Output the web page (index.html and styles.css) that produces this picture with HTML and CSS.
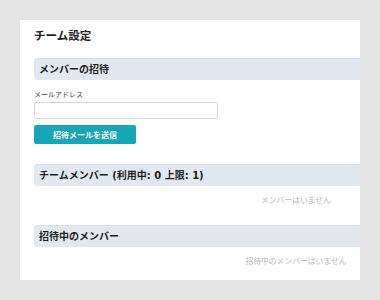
FILE: index.html
```html
<!DOCTYPE html>
<html lang="ja">
<head>
<meta charset="utf-8">
<link rel="stylesheet" href="styles.css">
</head>
<body>
  <div class="card">
    <div class="inner">
      <h1 class="title">チーム設定</h1>
      <section class="section">
        <h2 class="section-head">メンバーの招待</h2>
        <label class="label">メールアドレス</label>
        <input class="input" type="email">
        <button class="btn">招待メールを送信</button>
      </section>
      <section class="section">
        <h2 class="section-head head-2">チームメンバー (利用中: 0 上限: 1)</h2>
        <p class="empty">メンバーはいません</p>
      </section>
      <section class="section">
        <h2 class="section-head head-3">招待中のメンバー</h2>
        <p class="empty">招待中のメンバーはいません</p>
      </section>
    </div>
  </div>
</body>
</html>
```

FILE: styles.css
```css
html, body {
  margin: 0;
  padding: 0;
}
body {
  background: #e5e5e5;
  padding: 20px;
  font-family: "DejaVu Sans", "Noto Sans CJK JP", sans-serif;
  color: #222;
}
.card {
  width: 340px;
  height: 260px;
  background: #fff;
  overflow: hidden;
  box-sizing: border-box;
  padding-left: 14px;
}
.inner {
  width: 524px;
  display: flex;
  flex-direction: column;
}
.title {
  margin: 0;
  padding-top: 9px;
  font-size: 11.5px;
  line-height: 15px;
  font-weight: bold;
  color: #222;
}
.section {
  display: flex;
  flex-direction: column;
  align-items: flex-start;
}
.section-head {
  align-self: stretch;
  margin: 14px 0 0;
  height: 22px;
  box-sizing: border-box;
  line-height: 21px;
  padding-left: 5px;
  font-size: 10px;
  font-weight: bold;
  color: #1e1e1e;
  background: #e2e8f0;
  border-top: 1px solid #d9dfe8;
  border-radius: 3px 0 0 3px;
}
.head-2 {
  margin-top: 20px;
}
.head-3 {
  margin-top: 19px;
}
.label {
  margin-top: 10px;
  font-size: 7px;
  line-height: 10px;
  color: #444;
}
.input {
  margin: 2px 0 0;
  width: 184px;
  height: 17px;
  box-sizing: border-box;
  border: 1px solid #d6d6d6;
  border-radius: 2px;
  padding: 0 4px;
  background: #fff;
}
.btn {
  margin-top: 6px;
  width: 102px;
  height: 19px;
  border: none;
  border-radius: 2px;
  background: #17a6b8;
  color: #fff;
  font-family: "DejaVu Sans", "Noto Sans CJK JP", sans-serif;
  font-weight: bold;
  font-size: 8px;
  padding: 0;
}
.empty {
  align-self: stretch;
  margin: 10px 0 0;
  text-align: center;
  font-size: 7.8px;
  line-height: 10px;
  color: #b8b8b8;
}
```
